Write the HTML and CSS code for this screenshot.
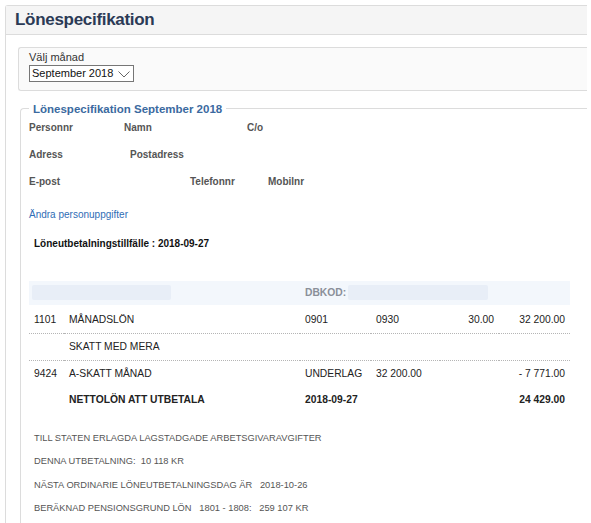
FILE: index.html
```html
<!DOCTYPE html>
<html lang="sv">
<head>
    <meta charset="UTF-8">
    <meta name="viewport" content="width=device-width, initial-scale=1.0">
    <title>Lönespecifikation</title>
    <link rel="stylesheet" href="styles.css">
</head>
<body>
    <div class="page">
        <div class="page-header">
            <h1>Lönespecifikation</h1>
        </div>

        <div class="page-body">
            <div class="month-box">
                <label for="month">Välj månad</label>
                <span class="select-wrap">
                    <select id="month">
                        <option>September 2018</option>
                        <option>Augusti 2018</option>
                        <option>Juli 2018</option>
                    </select>
                    <svg class="chevron" width="12" height="7" viewBox="0 0 12 7">
                        <path d="M0.5 0.5 L6 6 L11.5 0.5" fill="none" stroke="#666" stroke-width="1"/>
                    </svg>
                </span>
            </div>

            <fieldset class="spec">
                <legend>Lönespecifikation September 2018</legend>

                <div class="info-row">
                    <span class="info-label personnr">Personnr</span>
                    <span class="info-label namn">Namn</span>
                    <span class="info-label">C/o</span>
                </div>
                <div class="info-row">
                    <span class="info-label adress">Adress</span>
                    <span class="info-label">Postadress</span>
                </div>
                <div class="info-row">
                    <span class="info-label epost">E-post</span>
                    <span class="info-label telefon">Telefonnr</span>
                    <span class="info-label">Mobilnr</span>
                </div>

                <a class="edit-link" href="#">Ändra personuppgifter</a>

                <div class="pay-date">Löneutbetalningstillfälle : 2018-09-27</div>

                <table class="salary-table">
                    <colgroup>
                        <col class="c-code">
                        <col class="c-name">
                        <col class="c-a">
                        <col class="c-b">
                        <col class="c-c">
                        <col class="c-d">
                    </colgroup>
                    <thead>
                        <tr>
                            <th colspan="2" class="band-left"><span class="blank-box box-one"></span></th>
                            <th colspan="4" class="band-right">
                                <span class="dbkod">DBKOD:</span><span class="blank-box box-two"></span>
                            </th>
                        </tr>
                    </thead>
                    <tbody>
                        <tr class="first dotted">
                            <td>1101</td>
                            <td>MÅNADSLÖN</td>
                            <td>0901</td>
                            <td>0930</td>
                            <td class="num">30.00</td>
                            <td class="num">32 200.00</td>
                        </tr>
                        <tr class="dotted">
                            <td></td>
                            <td>SKATT MED MERA</td>
                            <td></td>
                            <td></td>
                            <td></td>
                            <td></td>
                        </tr>
                        <tr>
                            <td>9424</td>
                            <td>A-SKATT MÅNAD</td>
                            <td>UNDERLAG</td>
                            <td>32 200.00</td>
                            <td></td>
                            <td class="num">- 7 771.00</td>
                        </tr>
                        <tr class="total">
                            <td></td>
                            <td>NETTOLÖN ATT UTBETALA</td>
                            <td>2018-09-27</td>
                            <td></td>
                            <td></td>
                            <td class="num">24 429.00</td>
                        </tr>
                    </tbody>
                </table>

                <div class="notes">
                    <div>TILL STATEN ERLAGDA LAGSTADGADE ARBETSGIVARAVGIFTER</div>
                    <div>DENNA UTBETALNING:&nbsp; 10 118 KR</div>
                    <div>NÄSTA ORDINARIE LÖNEUTBETALNINGSDAG ÄR&nbsp;&nbsp; 2018-10-26</div>
                    <div>BERÄKNAD PENSIONSGRUND LÖN&nbsp;&nbsp; 1801 - 1808:&nbsp;&nbsp; 259 107 KR</div>
                </div>
            </fieldset>
        </div>
    </div>
</body>
</html>
```

FILE: styles.css
```css
* {
    margin: 0;
    padding: 0;
    box-sizing: border-box;
}

body {
    font-family: 'Liberation Sans', Arial, sans-serif;
    background-color: white;
    color: #222;
    overflow: hidden;
}

.page {
    margin: 5px 4px 0 5px;
    min-height: calc(100vh - 5px);
    display: flex;
    flex-direction: column;
    border-top: 1px solid #dcdcdc;
    border-left: 1px solid #dcdcdc;
    border-top-left-radius: 3px;
}

.page-header {
    height: 29px;
    flex-shrink: 0;
    background-color: #f5f5f5;
    border-bottom: 1px solid #dcdcdc;
    padding-left: 9px;
}

.page-header h1 {
    font-size: 17px;
    line-height: 28px;
    font-weight: bold;
    color: #2b3a55;
    letter-spacing: -0.3px;
}

.page-body {
    flex: 1;
    display: flex;
    flex-direction: column;
    padding: 12px 0 0 12px;
}

.month-box {
    background-color: #fafafa;
    border: 1px solid #dcdcdc;
    border-right: none;
    border-radius: 3px 0 0 3px;
    padding: 4px 0 8px 10px;
}

.month-box label {
    display: block;
    font-size: 11px;
    line-height: 11px;
    color: #333;
}

.select-wrap {
    position: relative;
    display: inline-block;
}

.select-wrap select {
    appearance: none;
    -webkit-appearance: none;
    display: block;
    width: 105px;
    height: 17px;
    border: 1px solid #767676;
    border-radius: 0;
    background: white;
    font-family: 'Liberation Sans', Arial, sans-serif;
    font-size: 11px;
    color: #111;
    padding: 0 0 0 2px;
    outline: none;
}

.chevron {
    position: absolute;
    right: 4px;
    top: 6px;
    pointer-events: none;
}

.spec {
    flex: 1;
    margin: 11px 0 0 2px;
    border: none;
    border-top: 1px solid #dcdcdc;
    border-left: 1px solid #dcdcdc;
    border-top-left-radius: 4px;
    padding: 6px 0 0 8px;
    min-width: 0;
}

.spec legend {
    font-size: 11.5px;
    line-height: 14px;
    font-weight: bold;
    color: #3b6aa0;
    padding: 0 4px;
}

.info-row {
    display: flex;
    font-size: 10px;
    line-height: 12px;
    font-weight: bold;
    color: #555;
    margin-bottom: 15px;
}

.info-label.personnr { width: 95px; }
.info-label.namn { width: 123px; }
.info-label.adress { width: 101px; }
.info-label.epost { width: 161px; }
.info-label.telefon { width: 78px; }

.edit-link {
    display: block;
    margin-top: 21px;
    font-size: 10px;
    line-height: 12px;
    color: #2f6db5;
    text-decoration: none;
}

.pay-date {
    margin: 17px 0 0 5px;
    font-size: 10px;
    line-height: 12px;
    font-weight: bold;
    color: #111;
}

.salary-table {
    margin-top: 31px;
    width: 541px;
    table-layout: fixed;
    border-collapse: collapse;
    font-size: 10.3px;
    color: #222;
}

.c-code { width: 35px; }
.c-name { width: 236px; }
.c-a { width: 71px; }
.c-b { width: 69px; }
.c-c { width: 59px; }
.c-d { width: 71px; }

.salary-table th {
    height: 24px;
    background-color: #f3f7fc;
    text-align: left;
    vertical-align: middle;
}

.band-left {
    padding-left: 3px;
}

.band-right {
    padding-left: 5px;
}

.blank-box {
    display: inline-block;
    height: 15px;
    background-color: #e8eef7;
    border-radius: 2px;
    vertical-align: middle;
}

.box-one { width: 139px; }
.box-two { width: 140px; margin-left: 2px; }

.dbkod {
    vertical-align: middle;
    font-size: 10.3px;
    font-weight: bold;
    color: #8a8f99;
}

.salary-table td {
    padding: 7px 5px;
    line-height: 12px;
    white-space: nowrap;
}

.salary-table tr.first td {
    padding-top: 9px;
}

.salary-table tr.dotted td {
    border-bottom: 1px dotted #b5b5b5;
}

.salary-table td.num {
    text-align: right;
}

.salary-table tr.total td {
    font-weight: bold;
}

.notes {
    margin-top: 14px;
    padding-left: 5px;
    font-size: 9.3px;
    line-height: 23.5px;
    color: #555;
}
```
